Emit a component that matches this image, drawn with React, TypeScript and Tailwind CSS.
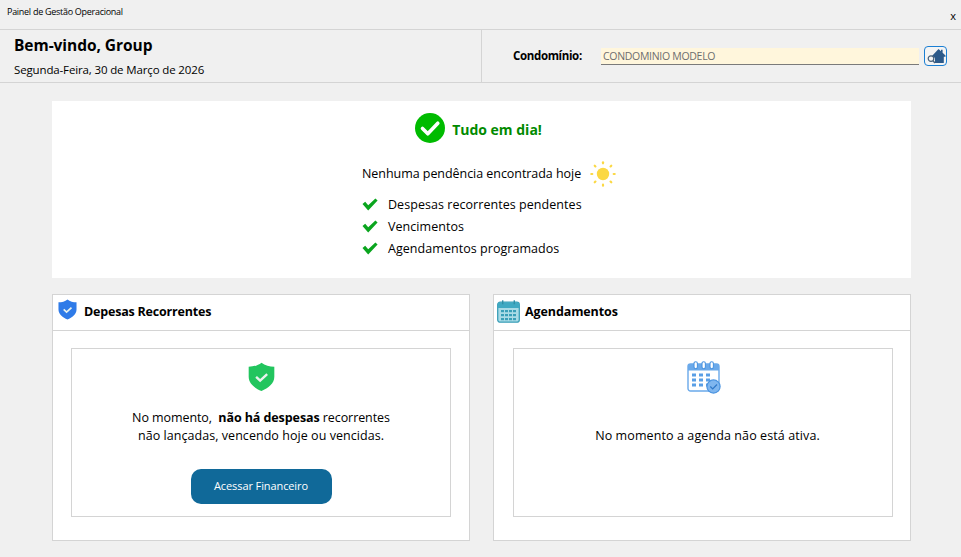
const font = { fontFamily: '"Open Sans", sans-serif' };

function SunIcon() {
    const rays = [0, 45, 90, 135, 180, 225, 270, 315];
    return (
        <svg width="28" height="28" viewBox="0 0 28 28">
            <circle cx="14" cy="14" r="6.2" fill="#fbd843" />
            {rays.map((r) => (
                <rect key={r} x="12.9" y="1.2" width="2.2" height="3.2" rx="1.1" fill="#fbd843" transform={`rotate(${r} 14 14)`} />
            ))}
        </svg>
    );
}

function BigCheck() {
    return (
        <svg width="30" height="30" viewBox="0 0 30 30">
            <circle cx="15" cy="15" r="15" fill="#00bb00" />
            <path d="M7.5 15.5 L12.8 20.8 L22.8 10.2" fill="none" stroke="#fff" strokeWidth="3.6" strokeLinecap="round" strokeLinejoin="round" />
        </svg>
    );
}

function SmallCheck() {
    return (
        <svg width="16" height="13" viewBox="0 0 16 13">
            <path d="M0.5 6 L3.2 3.8 L6.2 7.2 L13.4 0.4 L15.6 2.4 L6.2 12.6 Z" fill="#0aa51e" />
        </svg>
    );
}

function Shield({ color, size }: { color: string; size: number }) {
    return (
        <svg width={size} height={size * 1.1} viewBox="0 0 20 22">
            <path d="M10 0.5 C12.5 2.5 16 3.5 19.5 3.5 V11 C19.5 16 15 19.5 10 21.5 C5 19.5 0.5 16 0.5 11 V3.5 C4 3.5 7.5 2.5 10 0.5 Z" fill={color} />
            <path d="M6 11 L9 13.8 L14.2 9" fill="none" stroke="#e8f2ee" strokeWidth="1.8" />
        </svg>
    );
}

function CalendarTeal() {
    return (
        <svg width="23" height="23" viewBox="0 0 23 23">
            <rect x="0.7" y="2.2" width="21.6" height="20" rx="2.5" fill="#a9dbe6" stroke="#3a9fb8" strokeWidth="1.3" />
            <path d="M0.7 8 V4.7 C0.7 3.3 1.8 2.2 3.2 2.2 H19.8 C21.2 2.2 22.3 3.3 22.3 4.7 V8 Z" fill="#3fa9c2" />
            <rect x="5" y="0.3" width="1.4" height="4" fill="#2f8ea6" />
            <rect x="16.6" y="0.3" width="1.4" height="4" fill="#2f8ea6" />
            {[10, 14, 18].map((y) =>
                [4, 8, 12, 16].map((x) => <rect key={`${x}-${y}`} x={x} y={y} width="3" height="2.2" fill="#3a9fb8" />)
            )}
        </svg>
    );
}

function CalendarBlue() {
    return (
        <svg width="34" height="33" viewBox="0 0 34 33">
            <rect x="1" y="3" width="31" height="27" rx="2.5" fill="#fff" stroke="#6aa9ea" strokeWidth="1.4" />
            <path d="M1 9.5 V5.5 C1 4 2 3 3.5 3 H29.5 C31 3 32 4 32 5.5 V9.5 Z" fill="#6aa9ea" />
            {[7, 15, 23].map((x) => (
                <rect key={x} x={x} y="0.7" width="3.4" height="7" rx="1.7" fill="#fff" stroke="#4b94e0" strokeWidth="1.1" />
            ))}
            {[12.5, 17.5, 22.5].map((y) =>
                [5, 12, 19].map((x) => <rect key={`${x}-${y}`} x={x} y={y} width="4" height="3" fill="#5a9fe6" />)
            )}
            <circle cx="26.5" cy="25.5" r="6.6" fill="#7fb6ef" stroke="#4b94e0" strokeWidth="1.2" />
            <path d="M23.3 25.5 L25.7 28 L30 23.5" fill="none" stroke="#2f78c8" strokeWidth="1.2" />
        </svg>
    );
}

function HouseSearch() {
    return (
        <svg width="20" height="16" viewBox="0 0 20 16">
            <path d="M12.5 1 L15 3.2 V1.8 H16.6 V4.7 L19.5 7.6 V8.8 L17.8 8.8 V15 H9 V10 L6 8 Z" fill="#2d5a8a" />
            <circle cx="5" cy="10.6" r="2.8" fill="#f4f4f4" stroke="#46607a" strokeWidth="1.2" />
            <path d="M7 12.8 L9 15" stroke="#46607a" strokeWidth="1.4" />
        </svg>
    );
}

const checks = ['Despesas recorrentes pendentes', 'Vencimentos', 'Agendamentos programados'];

export default function App() {
    return (
        <div className="w-[961px] h-[557px] bg-[#f0f0f0] text-black overflow-hidden flex flex-col" style={font}>
            {/* Title bar */}
            <div className="h-[30px] shrink-0 flex justify-between border-b border-[#d4d4d4] pl-[7px] pr-[5px]">
                <span className="text-[9px] leading-none mt-[7px] tracking-[-0.28px]">Painel de Gestão Operacional</span>
                <span className="text-[11px] leading-none mt-[10px]">x</span>
            </div>

            {/* Header */}
            <div className="h-[53px] shrink-0 flex border-b border-[#d4d4d4]">
                <div className="w-[482px] shrink-0 border-r border-[#d4d4d4] pl-[14px] pt-[5px]">
                    <div className="text-[15.5px] leading-5 font-bold tracking-[-0.05px]">Bem-vindo, Group</div>
                    <div className="text-[11.5px] leading-4 mt-[7px] tracking-[-0.14px]">Segunda-Feira, 30 de Março de 2026</div>
                </div>
                <div className="flex-1 flex items-center pl-[31px]">
                    <span className="text-[11.5px] font-bold w-[88px] tracking-[-0.35px]">Condomínio:</span>
                    <div className="w-[318px] h-[17px] bg-[#fff6dc] border-b border-[#7a7a7a] text-[10.5px] leading-4 text-[#6d6d6d] pl-[2px] tracking-[-0.3px]">
                        CONDOMINIO MODELO
                    </div>
                    <button className="ml-[5px] w-[23px] h-[20px] flex items-center justify-center rounded-[4px] border border-[#1a7fd4] bg-[#f4f4f4]">
                        <HouseSearch />
                    </button>
                </div>
            </div>

            {/* Status */}
            <div className="mt-[18px] ml-[52px] w-[859px] h-[177px] shrink-0 bg-white pt-[12px]">
                <div className="flex items-center justify-center gap-[7px] pr-[6px]">
                    <BigCheck />
                    <span className="mt-[3px] text-[14px] font-bold text-[#008a00]">Tudo em dia!</span>
                </div>
                <div className="ml-[310px] mt-[17px]">
                    <div className="flex items-center h-[28px] text-[12.5px] tracking-[-0.05px]">
                        <span>Nenhuma pendência encontrada hoje</span>
                        <span className="ml-[8px]"><SunIcon /></span>
                    </div>
                    <div className="mt-[8px] flex flex-col gap-[3px]">
                        {checks.map((c) => (
                            <div key={c} className="flex items-center h-[19px] text-[12.5px] tracking-[0.05px]">
                                <span className="w-[26px] -mt-[3px] flex"><SmallCheck /></span>
                                <span>{c}</span>
                            </div>
                        ))}
                    </div>
                </div>
            </div>

            {/* Cards */}
            <div className="mt-[16px] ml-[52px] w-[859px] flex justify-between">
                <div className="w-[418px] h-[247px] bg-white border border-[#d4d4d4] flex flex-col">
                    <div className="h-[36px] shrink-0 border-b border-[#d4d4d4] flex items-center pl-[5px] gap-[7px]">
                        <span className="-mt-[6px] flex"><Shield color="#2f7be8" size={19} /></span>
                        <span className="text-[12.5px] font-bold tracking-[-0.2px]">Depesas Recorrentes</span>
                    </div>
                    <div className="mx-[18px] mt-[17px] h-[169px] border border-[#d4d4d4] flex flex-col items-center pt-[13px]">
                        <Shield color="#22c55e" size={27} />
                        <p className="mt-[17px] text-[12.5px] leading-[18px] text-center tracking-[0.05px]">
                            <span className="tracking-[-0.08px]">No momento,&nbsp; <b>não há despesas</b> recorrentes</span><br />
                            não lançadas, vencendo hoje ou vencidas.
                        </p>
                        <button className="mt-[24px] w-[141px] h-[35px] rounded-[10px] bg-[#106999] text-white text-[11px] tracking-[-0.1px]">
                            Acessar Financeiro
                        </button>
                    </div>
                </div>

                <div className="w-[418px] h-[247px] bg-white border border-[#d4d4d4] flex flex-col">
                    <div className="h-[36px] shrink-0 border-b border-[#d4d4d4] flex items-center pl-[3px] gap-[5px]">
                        <span className="-mt-[3px] flex"><CalendarTeal /></span>
                        <span className="text-[12.5px] font-bold tracking-[-0.1px]">Agendamentos</span>
                    </div>
                    <div className="ml-[19px] w-[380px] mt-[17px] h-[169px] border border-[#d4d4d4] flex flex-col items-center pt-[12px]">
                        <span className="ml-[1px] flex"><CalendarBlue /></span>
                        <p className="mt-[33px] ml-[9px] text-[12.5px] leading-[18px] tracking-[0.1px]">No momento a agenda não está ativa.</p>
                    </div>
                </div>
            </div>
        </div>
    );
}
